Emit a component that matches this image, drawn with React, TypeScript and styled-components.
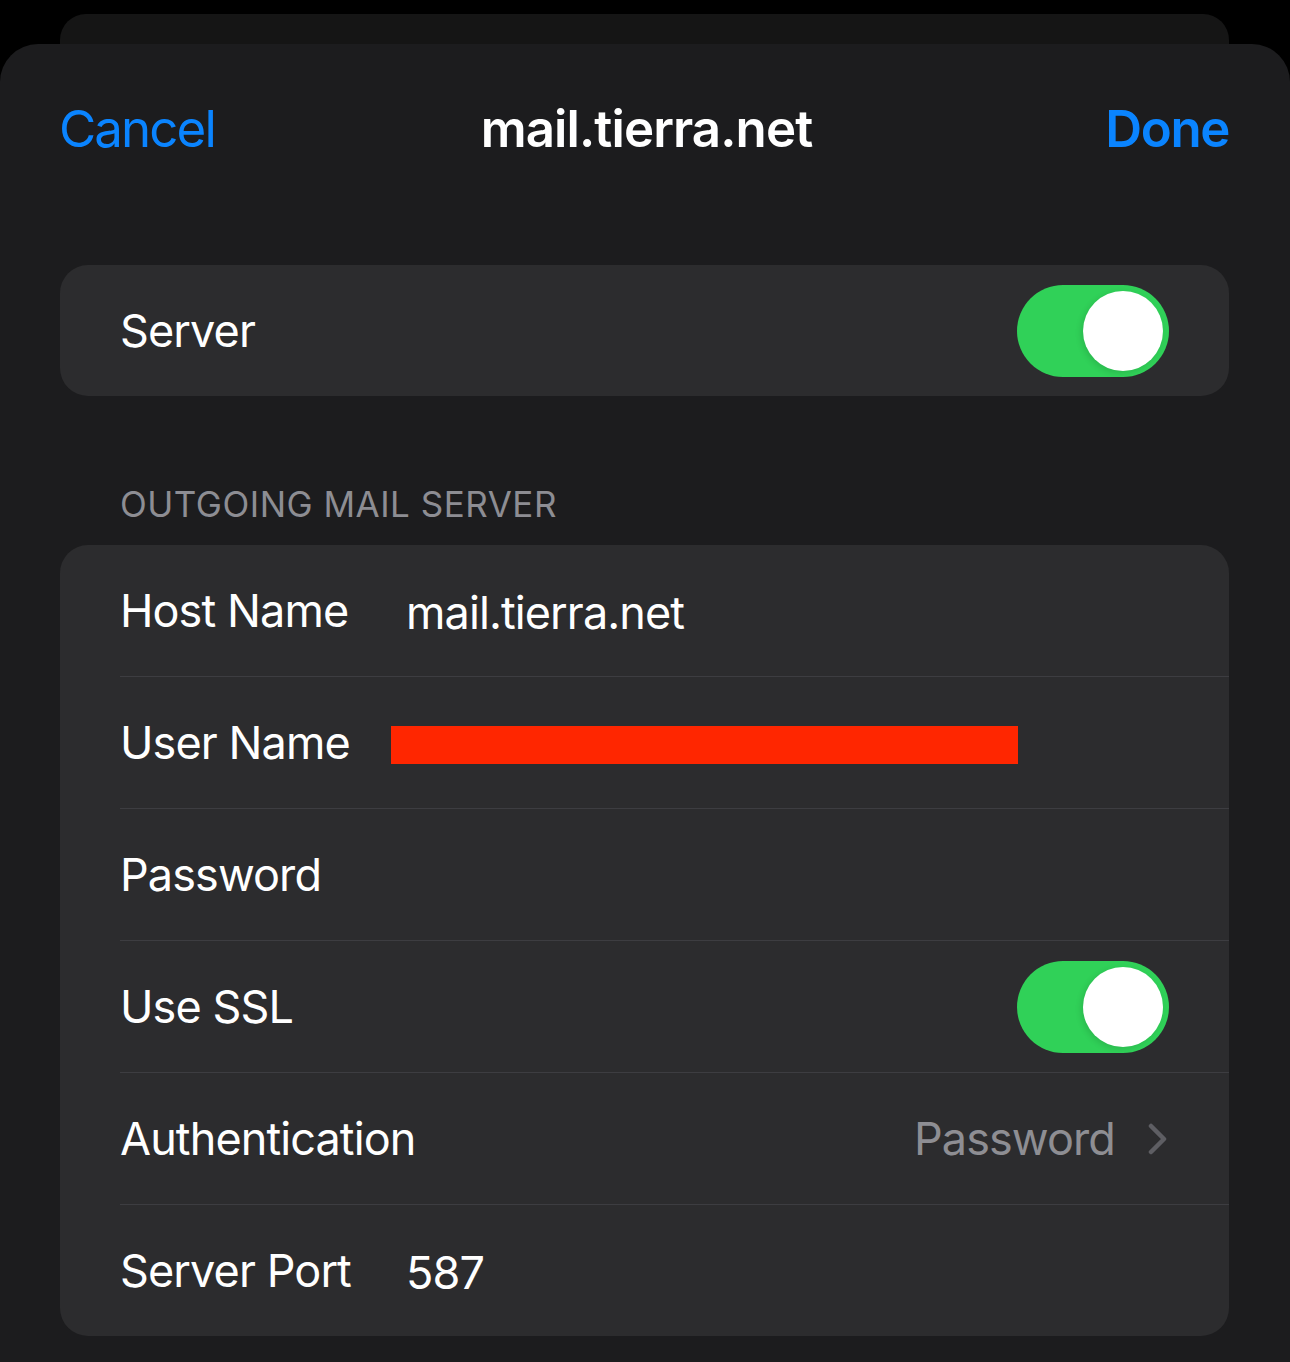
import styled, { createGlobalStyle } from 'styled-components';

const GlobalStyle = createGlobalStyle`
  html, body {
    margin: 0;
    padding: 0;
    background: #000;
  }
  body {
    font-family: Inter, 'Noto Sans', sans-serif;
    -webkit-font-smoothing: antialiased;
  }
`;

const Screen = styled.div`
  width: 1290px;
  height: 1362px;
  padding-top: 14px;
  box-sizing: border-box;
  overflow: hidden;
  display: flex;
  flex-direction: column;
`;

const BackSheet = styled.div`
  height: 30px;
  margin: 0 61px 0 60px;
  background: #151515;
  border-radius: 26px 26px 0 0;
`;

const Sheet = styled.div`
  flex: 1;
  background: #1c1c1e;
  border-radius: 38px 38px 0 0;
  padding: 0 61px 0 60px;
`;

const NavBar = styled.header`
  height: 168px;
  display: grid;
  grid-template-columns: 1fr auto 1fr;
  align-items: center;
`;

const NavButton = styled.button<{ bold?: boolean; end?: boolean }>`
  background: none;
  border: 0;
  padding: 0;
  color: #0a84ff;
  font-family: inherit;
  font-size: 51px;
  font-weight: ${(p) => (p.bold ? 600 : 400)};
  letter-spacing: ${(p) => (p.bold ? '-1.4px' : '-1.9px')};
  justify-self: ${(p) => (p.end ? 'end' : 'start')};
  margin-left: ${(p) => (p.end ? 0 : '-1px')};
`;

const Title = styled.h1`
  margin: 0 0 0 4px;
  color: #fff;
  font-size: 51px;
  font-weight: 600;
  letter-spacing: -0.9px;
`;

const Card = styled.section`
  background: #2c2c2e;
  border-radius: 28px;
  overflow: hidden;
`;

const TopCard = styled(Card)`
  margin-top: 53px;
`;

const SectionHeader = styled.h2`
  margin: 87px 0 19px 60px;
  height: 43px;
  line-height: 43px;
  color: #8d8d93;
  font-size: 35px;
  font-weight: 400;
  letter-spacing: 0.5px;
`;

const Row = styled.div<{ last?: boolean }>`
  height: 131px;
  margin-left: 60px;
  padding-right: 60px;
  display: flex;
  align-items: center;
  border-bottom: ${(p) => (p.last ? '0' : '1px solid #3d3d41')};
`;

const Label = styled.span<{ fixed?: boolean }>`
  color: #fff;
  font-size: 45px;
  letter-spacing: -0.9px;
  width: ${(p) => (p.fixed ? '286px' : 'auto')};
  flex-shrink: 0;
`;

const Value = styled.span`
  color: #fff;
  font-size: 45px;
  letter-spacing: -0.9px;
  padding-top: 4px;
`;

const Redaction = styled.div`
  width: 627px;
  height: 38px;
  margin-left: -15px;
  margin-top: 4px;
  background: #ff2600;
`;

const Spacer = styled.div`
  flex: 1;
`;

const Detail = styled.span`
  color: #8e8e93;
  font-size: 45px;
  letter-spacing: -0.9px;
  margin-right: 33px;
`;

const Chevron = styled.svg`
  width: 20px;
  height: 32px;
  margin-right: 1px;
`;

const Track = styled.div<{ on?: boolean }>`
  width: 152px;
  height: 92px;
  border-radius: 46px;
  background: ${(p) => (p.on ? '#30d158' : '#39393d')};
  display: flex;
  align-items: center;
  justify-content: ${(p) => (p.on ? 'flex-end' : 'flex-start')};
  padding: 0 6px;
  box-sizing: border-box;
  flex-shrink: 0;
`;

const Knob = styled.div`
  width: 80px;
  height: 80px;
  border-radius: 50%;
  background: #fff;
  box-shadow: -2px 2px 6px rgba(0, 0, 0, 0.12);
`;

const Toggle = ({ on }: { on?: boolean }) => (
  <Track on={on}>
    <Knob />
  </Track>
);

const App = () => {
  return (
    <>
      <GlobalStyle />
      <Screen>
        <BackSheet />
        <Sheet>
          <NavBar>
            <NavButton>Cancel</NavButton>
            <Title>mail.tierra.net</Title>
            <NavButton bold end>
              Done
            </NavButton>
          </NavBar>

          <TopCard>
            <Row last>
              <Label>Server</Label>
              <Spacer />
              <Toggle on />
            </Row>
          </TopCard>

          <SectionHeader>OUTGOING MAIL SERVER</SectionHeader>
          <Card>
            <Row>
              <Label fixed>Host Name</Label>
              <Value>mail.tierra.net</Value>
            </Row>
            <Row>
              <Label fixed>User Name</Label>
              <Redaction />
            </Row>
            <Row>
              <Label fixed>Password</Label>
            </Row>
            <Row>
              <Label>Use SSL</Label>
              <Spacer />
              <Toggle on />
            </Row>
            <Row>
              <Label>Authentication</Label>
              <Spacer />
              <Detail>Password</Detail>
              <Chevron viewBox="0 0 20 32">
                <path
                  d="M3 3 L16 16 L3 29"
                  fill="none"
                  stroke="#5e5e63"
                  strokeWidth="4.5"
                  strokeLinecap="round"
                  strokeLinejoin="round"
                />
              </Chevron>
            </Row>
            <Row last>
              <Label fixed>Server Port</Label>
              <Value>587</Value>
            </Row>
          </Card>
        </Sheet>
      </Screen>
    </>
  );
};

export default App;
